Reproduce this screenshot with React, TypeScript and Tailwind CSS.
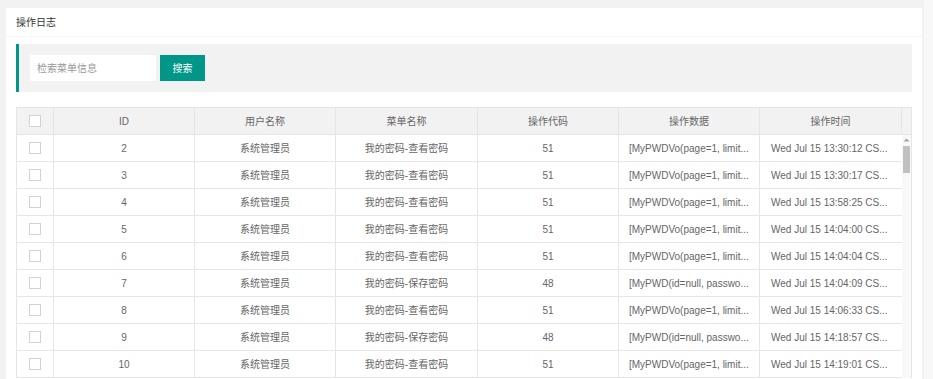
const VIEW = "查看密码";
const SAVE = "保存密码";
const VO = "[MyPWDVo(page=1, limit...";
const PWD = "[MyPWD(id=null, passwo...";

const rows = [
  { id: 2, menu: VIEW, code: 51, data: VO, time: "13:30:12" },
  { id: 3, menu: VIEW, code: 51, data: VO, time: "13:30:17" },
  { id: 4, menu: VIEW, code: 51, data: VO, time: "13:58:25" },
  { id: 5, menu: VIEW, code: 51, data: VO, time: "14:04:00" },
  { id: 6, menu: VIEW, code: 51, data: VO, time: "14:04:04" },
  { id: 7, menu: SAVE, code: 48, data: PWD, time: "14:04:09" },
  { id: 8, menu: VIEW, code: 51, data: VO, time: "14:06:33" },
  { id: 9, menu: SAVE, code: 48, data: PWD, time: "14:18:57" },
  { id: 10, menu: VIEW, code: 51, data: VO, time: "14:19:01" },
];

const cols = "grid grid-cols-[37px_141px_141px_142px_141px_141px_142px]";

function Checkbox() {
  return <span className="block w-[12px] h-[12px] border border-[#d2d2d2] bg-white" />;
}

export default function App() {
  return (
    <div className="h-[379px] overflow-hidden flex bg-[#f2f2f2] font-['Liberation_Sans','Noto_Sans_CJK_SC',sans-serif] text-[10px] text-[#666]">
      <div className="flex-1 pl-[6px] pt-[8px]">
        <div className="bg-white w-[916px] h-[400px]">
          {/* card header */}
          <div className="h-[29px] flex items-center px-[10px] text-[#333] border-b border-[#f6f6f6]">
            操作日志
          </div>

          <div className="px-[10px] pt-[7px]">
            {/* search bar */}
            <div className="h-[48px] flex items-center gap-[4px] bg-[#f2f2f2] border-l-[3px] border-[#009688] pl-[11px]">
              <div className="w-[126px] h-[26px] bg-white flex items-center pl-[7px] text-[#999]">
                检索菜单信息
              </div>
              <div className="w-[45px] h-[26px] bg-[#009688] text-white flex items-center justify-center">
                搜索
              </div>
            </div>

            {/* table */}
            <div className="mt-[15px] border border-[#e6e6e6] border-b-0">
              <div className="flex bg-[#f2f2f2] h-[27px] border-b border-[#e6e6e6]">
                <div className={cols}>
                  <div className="flex items-center justify-center border-r border-[#e6e6e6]">
                    <Checkbox />
                  </div>
                  {["ID", "用户名称", "菜单名称", "操作代码", "操作数据", "操作时间"].map((h) => (
                    <div key={h} className="flex items-center justify-center border-r border-[#e6e6e6]">
                      {h}
                    </div>
                  ))}
                </div>
                <div className="flex-1" />
              </div>

              <div className="flex">
                <div>
                  {rows.map((r) => (
                    <div key={r.id} className={`${cols} h-[27px] border-b border-[#e6e6e6]`}>
                      <div className="flex items-center justify-center border-r border-[#e6e6e6]">
                        <Checkbox />
                      </div>
                      <div className="flex items-center justify-center border-r border-[#e6e6e6]">{r.id}</div>
                      <div className="flex items-center justify-center border-r border-[#e6e6e6]">系统管理员</div>
                      <div className="flex items-center justify-center border-r border-[#e6e6e6]">
                        我的密码-{r.menu}
                      </div>
                      <div className="flex items-center justify-center border-r border-[#e6e6e6]">{r.code}</div>
                      <div className="flex items-center pl-[10px] border-r border-[#e6e6e6] whitespace-nowrap">
                        {r.data}
                      </div>
                      <div className="flex items-center pl-[11px] whitespace-nowrap">
                        Wed Jul 15 {r.time} CS...
                      </div>
                    </div>
                  ))}
                </div>
                {/* scrollbar */}
                <div className="flex-1 bg-[#f8f8f8] flex flex-col items-center pt-[3px]">
                  <svg width="7" height="4" viewBox="0 0 7 4">
                    <path d="M0.5 3.5 L3.5 0.5 L6.5 3.5 Z" fill="#a3a3a3" />
                  </svg>
                  <div className="mt-[4px] w-[7px] h-[27px] bg-[#c1c1c1]" />
                </div>
              </div>
            </div>
          </div>
        </div>
      </div>
      <div className="w-[9px] bg-[#f8f8f8]" />
    </div>
  );
}
